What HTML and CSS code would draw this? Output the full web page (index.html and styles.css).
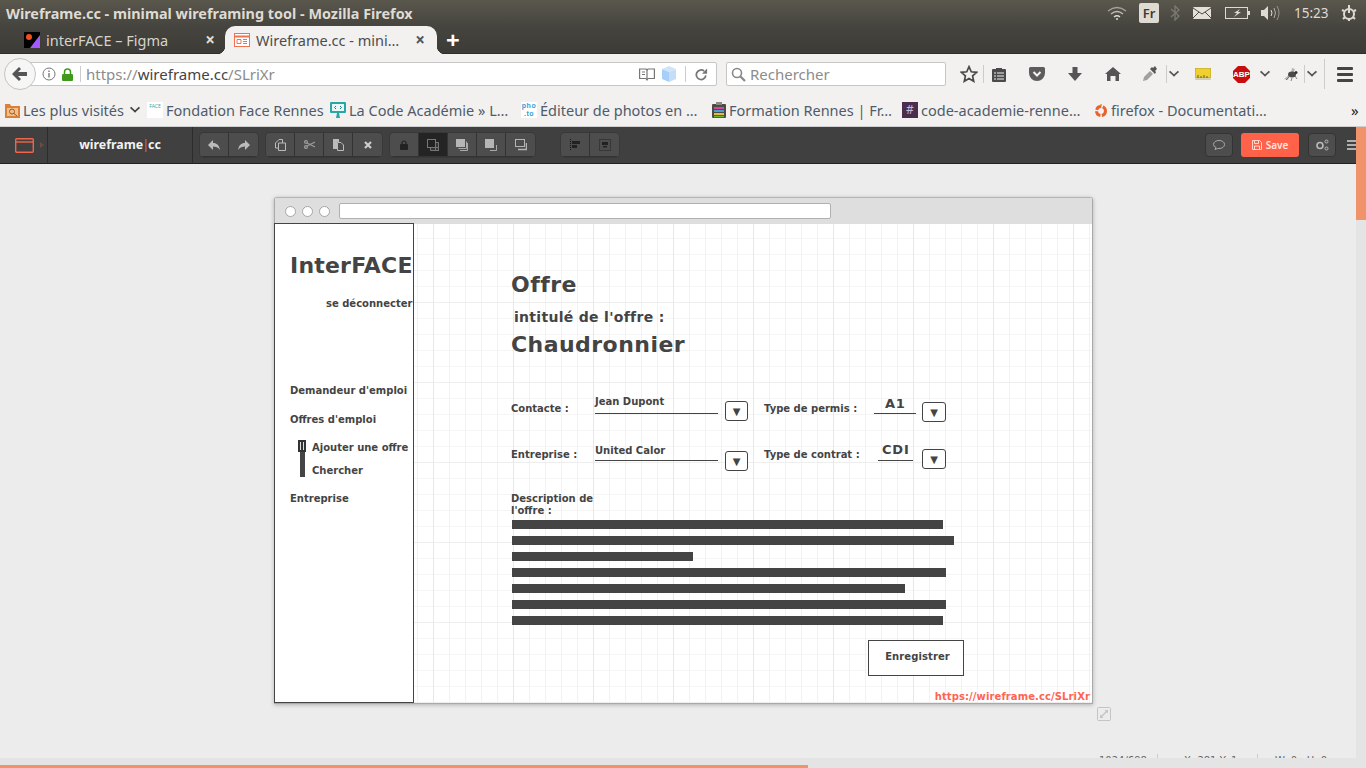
FILE: index.html
```html
<!DOCTYPE html>
<html lang="en">
<head>
    <meta charset="UTF-8">
    <meta name="viewport" content="width=device-width, initial-scale=1.0">
    <title>Wireframe.cc - minimal wireframing tool</title>
    <link rel="stylesheet" href="styles.css">
</head>
<body>
    <header class="os-top">
        <div class="title-row">
            <div class="win-title">Wireframe.cc - minimal wireframing tool - Mozilla Firefox</div>
            <div class="tray">
                <svg class="t-wifi" width="20" height="14" viewBox="0 0 20 14" fill="none" stroke="#dfdbd2" stroke-width="1.4"><path d="M1 5q9-7 18 0" opacity=".6"/><path d="M4 8q6-5 12 0" opacity=".8"/><path d="M7 11q3-2.500 6 0"/><circle cx="10" cy="13" r="1" fill="#dfdbd2" stroke="none"/></svg>
                <span class="t-lang">Fr</span>
                <svg class="t-bt" width="10" height="16" viewBox="0 0 10 16" fill="none" stroke="#7c7a72" stroke-width="1.300"><path d="M1 4l8 7-4 4V1l4 4-8 7"/></svg>
                <svg class="t-mail" width="18" height="12" viewBox="0 0 18 12"><rect width="18" height="12" rx="1" fill="#e4e0d8"/><path d="M0 1l9 6 9-6M0 11l6-6M18 11l-6-6" fill="none" stroke="#4b4a44"/></svg>
                <svg class="t-batt" width="25" height="12" viewBox="0 0 25 12"><rect x=".5" y=".5" width="22" height="11" fill="#55534b" stroke="#dfdbd2"/><rect x="23" y="4" width="2" height="4" fill="#dfdbd2"/><path d="M15 2l-6 4h3l-3 4 7-5h-3z" fill="#dfdbd2"/></svg>
                <svg class="t-vol" width="20" height="16" viewBox="0 0 20 16" fill="none" stroke="#dfdbd2"><path d="M1 5h3l4-4v14l-4-4H1z" fill="#dfdbd2" stroke="none"/><path d="M11 5q2 3 0 6"/><path d="M14 3q3 5 0 10" opacity=".7"/><path d="M17 1q4 7 0 14" opacity=".5"/></svg>
                <span class="t-time">15:23</span>
                <svg class="t-gear" width="16" height="16" viewBox="0 0 16 16" fill="none" stroke="#dfdbd2" stroke-width="2"><circle cx="8" cy="9" r="5"/><path d="M8 0v8M1 5l2 1M15 5l-2 1M2 14l2-2M14 14l-2-2M8 14v2"/></svg>
            </div>
        </div>
        <div class="tab-row">
            <div class="tab">
                <svg class="favicon" width="16" height="16" viewBox="0 0 16 16"><rect width="16" height="16" fill="#000"/><circle cx="5" cy="5" r="3" fill="#f24e1e"/><path d="M6 16l10-13v13z" fill="#a259ff"/></svg>
                <span class="tab-label">interFACE – Figma</span>
                <span class="tab-x light">×</span>
            </div>
            <div class="tab active">
                <svg class="favicon" width="16" height="16" viewBox="0 0 16 16" fill="none" stroke="#f0734f"><rect x=".5" y="1.500" width="15" height="13" fill="#fff"/><path d="M1 4.500h14" stroke-width="2"/><path d="M3 7.500h4v4H3zM9 7.500h4M9 9.500h4M9 11.500h4"/></svg>
                <span class="tab-label">Wireframe.cc - mini…</span>
                <span class="tab-x">×</span>
            </div>
            <span class="tab-new">+</span>
        </div>
    </header>

    <nav class="navbar">
        <span class="back-btn">
            <svg width="16" height="14" viewBox="0 0 16 14" fill="#555"><path d="M7 0l2 2-3 3h9v4H6l3 3-2 2-7-7z"/></svg>
        </span>
        <div class="url-box">
            <svg class="url-info" width="14" height="14" viewBox="0 0 14 14" fill="none" stroke="#777"><circle cx="7" cy="7" r="6"/><path d="M7 6v4.500M7 3.500v1.500" stroke-width="1.400"/></svg>
            <svg class="url-lock" width="11" height="13" viewBox="0 0 11 13"><path d="M2.500 6V4a3 3 0 0 1 6 0v2" fill="none" stroke="#3f9a1b" stroke-width="1.500"/><rect y="6" width="11" height="7" rx="1" fill="#3f9a1b"/></svg>
            <span class="url-sep"></span>
            <span class="url-text">https://<b>wireframe.cc</b>/SLriXr</span>
            <svg class="url-book" width="16" height="13" viewBox="0 0 16 13" fill="none" stroke="#777" stroke-width="1.200"><path d="M.6 1h6.400l1 1 1-1h6.400v9.500H9l-1 1.500-1-1.500H.6z"/><path d="M8 2v9M3 4h3M3 6.500h3"/></svg>
            <svg class="url-cube" width="16" height="16" viewBox="0 0 16 16"><path d="M8 0l7 3-7 3-7-3z" fill="#cfe5fb"/><path d="M1 3l7 3v10l-7-3z" fill="#a8d0f7"/><path d="M15 3l-7 3v10l7-3z" fill="#c4def8"/></svg>
            <span class="url-sep wide"></span>
            <svg class="url-reload" width="13" height="13" viewBox="0 0 15 14" fill="none" stroke="#777" stroke-width="2"><path d="M12.500 8a5.500 5.500 0 1 1-2-5"/><path d="M14 0v6H8z" fill="#777" stroke="none"/></svg>
        </div>
        <div class="search-box">
            <svg width="15" height="15" viewBox="0 0 15 15" fill="none" stroke="#888" stroke-width="1.600"><circle cx="6" cy="6" r="4.500"/><path d="M9.500 9.500L14 14" stroke-width="2.200"/></svg>
            <span>Rechercher</span>
        </div>
        <div class="nav-icons">
            <span class="slot s-star"><svg width="18" height="18" viewBox="0 0 16 16" fill="none" stroke="#4a4a4a" stroke-width="1.500"><path d="M8 1.500l2 4.500 4.800.5-3.600 3.200 1 4.800L8 12l-4.200 2.500 1-4.800L1.200 6.500 6 6z"/></svg></span>
            <span class="nav-sep"></span>
            <span class="slot s-list"><svg width="14" height="15" viewBox="0 0 14 15"><path d="M1 2h3V1h6v1h3a1 1 0 0 1 1 1v11a1 1 0 0 1-1 1H1a1 1 0 0 1-1-1V3a1 1 0 0 1 1-1z" fill="#4a4a4a"/><path d="M2 6h2M5 6h7M2 9h2M5 9h7M2 12h2M5 12h7" stroke="#f2f1f0"/></svg></span>
            <span class="slot s-wide"><svg width="16" height="14" viewBox="0 0 16 14"><path d="M1.500 0h13A1.500 1.500 0 0 1 16 1.500V6a8 8 0 0 1-16 0V1.500A1.500 1.500 0 0 1 1.500 0z" fill="#5c5c5c"/><path d="M4.500 5L8 8.500 11.500 5" fill="none" stroke="#f2f1f0" stroke-width="2"/></svg></span>
            <span class="slot s-wide"><svg width="14" height="14" viewBox="0 0 14 14" fill="#555"><path d="M4.500 0h5v6H14l-7 8-7-8h4.500z"/></svg></span>
            <span class="slot s-wide"><svg width="16" height="14" viewBox="0 0 16 14" fill="#555"><path d="M8 0l8 7h-2v7h-3.500V9h-5v5H2V7H0z"/></svg></span>
            <span class="slot s-drop"><svg width="16" height="16" viewBox="0 0 16 16"><path d="M1 15l1-4 6-6 3 3-6 6z" fill="#a0a0a0"/><path d="M8 3l5 5 1-2-1-1 2-2-2-3-2 2-1-1z" fill="#555"/></svg></span>
            <span class="nav-sep"></span>
            <span class="chev"></span>
            <span class="slot s-ruler"><svg width="16" height="12" viewBox="0 0 16 12"><rect width="16" height="10" rx="1" fill="#f0d030" stroke="#8f8431" stroke-width=".6"/><path d="M3 10V7M6 10V8M9 10V7M12 10V8" stroke="#6b5f13"/><path d="M0 11.500h16" stroke="#ccc"/></svg></span>
            <span class="slot s-abp"><svg width="17" height="17" viewBox="0 0 17 17"><path d="M5 0h7l5 5v7l-5 5H5l-5-5V5z" fill="#c70d0d"/></svg><span class="abp-text">ABP</span></span>
            <span class="chev"></span>
            <span class="slot s-fly"><svg width="16" height="13" viewBox="0 0 16 13"><path d="M1 11l6-5-2 6zM3 2l5 3 1-5 3 1-2 5z" fill="#b5b5b5"/><ellipse cx="9" cy="6.500" rx="4" ry="3" fill="#4a4a4a"/><circle cx="13" cy="4.500" r="1.500" fill="#333"/><path d="M6 9L3 12M9 10l-1 3M12 8l2 3" stroke="#555" stroke-width=".7"/></svg></span>
            <span class="nav-sep"></span>
            <span class="chev"></span>
            <span class="nav-sep tall"></span>
            <span class="burger"><i></i><i></i><i></i></span>
        </div>
    </nav>

    <div class="bookmarks">
        <div class="bm">
            <svg width="15" height="16" viewBox="0 0 15 16"><path d="M0 2h5l1 2h9v12H0z" fill="#d9813a"/><rect x="2" y="6" width="11" height="8" fill="#f2c18a"/><circle cx="7" cy="9.500" r="2.500" fill="none" stroke="#a4561a"/><path d="M9 11.500l3 2.500" stroke="#a4561a"/></svg>
            <span class="bm-label">Les plus visités</span>
            <span class="chev small"></span>
        </div>
        <div class="bm">
            <span class="ico-face">FACE</span>
            <span class="bm-label">Fondation Face Rennes</span>
        </div>
        <div class="bm">
            <svg width="16" height="16" viewBox="0 0 16 16"><rect width="16" height="11" rx="1" fill="#2aa7a5"/><rect x="2" y="2" width="12" height="7" fill="#e8f8f8"/><path d="M6 16h4l-1-5H7z" fill="#2aa7a5"/><path d="M6 4L4.500 5.500 6 7M10 4l1.500 1.500L10 7" fill="none" stroke="#1d7d7c"/></svg>
            <span class="bm-label">La Code Académie » L…</span>
        </div>
        <div class="bm">
            <span class="ico-pho"><span>pho</span><span>.to</span></span>
            <span class="bm-label">Éditeur de photos en …</span>
        </div>
        <div class="bm">
            <svg width="14" height="16" viewBox="0 0 14 16"><rect y="2" width="14" height="14" rx="1" fill="#4b4b45"/><rect x="4" width="6" height="3" fill="#8a8a82"/><path d="M2 6h10" stroke="#d94a8c" stroke-width="2"/><path d="M2 9h10" stroke="#4a9bd9" stroke-width="2"/><path d="M2 12h10" stroke="#e0c03a" stroke-width="2"/><path d="M2 14.500h10" stroke="#6fb23a" stroke-width="1.500"/></svg>
            <span class="bm-label">Formation Rennes | Fr…</span>
        </div>
        <div class="bm">
            <span class="ico-hash">#</span>
            <span class="bm-label">code-academie-renne…</span>
        </div>
        <div class="bm">
            <svg width="14" height="15" viewBox="0 0 14 15" fill="none" stroke="#e8622a" stroke-width="3"><circle cx="7" cy="8" r="4.500" stroke-dasharray="6 1.500"/><circle cx="7" cy="2" r="1" fill="#d9a126" stroke="none"/></svg>
            <span class="bm-label">firefox - Documentati…</span>
        </div>
        <span class="bm-more">»</span>
    </div>

    <div class="app-toolbar">
        <div class="tb-logo">
            <svg width="19" height="15" viewBox="0 0 19 15" fill="none" stroke="#f0654a" stroke-width="1.400"><rect x=".7" y=".7" width="17.600" height="13.600" rx="1"/><path d="M1 4h17"/></svg>
            <span class="tb-arrow"></span>
        </div>
        <div class="tb-brand">wireframe<span class="brand-bar">|</span>cc</div>
        <div class="tb-groups">
            <div class="btn-group">
                <span class="tbtn"><svg width="12" height="10" viewBox="0 0 12 10" fill="#bbb"><path d="M5 0v3c4 0 6 2 7 7-2-3-4-3.500-7-3.500V10L0 5z"/></svg></span>
                <span class="tbtn"><svg width="12" height="10" viewBox="0 0 12 10" fill="#bbb"><path d="M7 0v3C3 3 1 5 0 10c2-3 4-3.500 7-3.500V10l5-5z"/></svg></span>
            </div>
            <div class="btn-group">
                <span class="tbtn"><svg width="11" height="12" viewBox="0 0 11 12" fill="none" stroke="#bbb"><path d="M.5 4L4 .5h3.500V4M3.500 4h7v7.500h-7zM.5 4v5h3"/></svg></span>
                <span class="tbtn"><svg width="11" height="9" viewBox="0 0 11 9" fill="none" stroke="#999" stroke-width="1.300"><circle cx="2" cy="2" r="1.400"/><circle cx="2" cy="7" r="1.400"/><path d="M3 3l8 4M3 6l8-4"/></svg></span>
                <span class="tbtn"><svg width="11" height="12" viewBox="0 0 11 12"><path d="M0 0h6v3H4v7H0z" fill="#bbb"/><path d="M4.500 3.500H8l2.500 2.500v5.500h-6z" fill="#4d4d4d" stroke="#bbb"/></svg></span>
                <span class="tbtn"><svg width="8" height="8" viewBox="0 0 8 8" stroke="#ccc" stroke-width="2.200"><path d="M1 1l6 6M7 1L1 7"/></svg></span>
            </div>
            <div class="btn-group">
                <span class="tbtn"><svg width="8" height="10" viewBox="0 0 8 10"><path d="M2 4.500V3a2 2 0 0 1 4 0v1.500" fill="none" stroke="#222" stroke-width="1.200"/><rect y="4" width="8" height="6" rx="1" fill="#222"/></svg></span>
                <span class="tbtn on"><svg width="12" height="12" viewBox="0 0 12 12" fill="none" stroke="#777"><path d="M3.500 8.500h8v3h-8zM8.500 3.500h3v8h-3z" fill="#333"/><rect x=".5" y=".5" width="8" height="8" fill="#222"/></svg></span>
                <span class="tbtn"><svg width="12" height="12" viewBox="0 0 12 12" stroke="#aaa" fill="none"><rect width="9" height="8" fill="#b5b5b5" stroke="none"/><path d="M10.500 2.500v7h-8M11.500 4v7.500H4"/></svg></span>
                <span class="tbtn"><svg width="12" height="12" viewBox="0 0 12 12" stroke="#aaa" fill="none"><rect width="9" height="9" fill="#b5b5b5" stroke="none"/><path d="M11.500 6v5.500H5"/></svg></span>
                <span class="tbtn"><svg width="12" height="12" viewBox="0 0 12 12" stroke="#b5b5b5" fill="none"><rect x=".5" y=".5" width="9" height="7"/><path d="M3 10.500h8.500V4" stroke-width="1.500"/></svg></span>
            </div>
            <div class="btn-group last">
                <span class="tbtn"><svg width="10" height="12" viewBox="0 0 10 12"><path d="M.5 0v12" stroke="#111" stroke-dasharray="1 1"/><rect x="2" y="2" width="8" height="3" fill="#222"/><rect x="2" y="6" width="5" height="3" fill="#222"/></svg></span>
                <span class="tbtn"><svg width="12" height="12" viewBox="0 0 12 12"><rect x=".5" y=".5" width="11" height="11" fill="none" stroke="#222" stroke-dasharray="1 1"/><rect x="3" y="3" width="6" height="3" fill="#222"/><rect x="4" y="7" width="4" height="1.500" fill="#222"/></svg></span>
            </div>
        </div>
        <div class="tb-right">
            <span class="tbtn lone"><svg width="12" height="10" viewBox="0 0 12 10" fill="none" stroke="#aaa"><path d="M3 7.500Q.5 6.500.5 4.500C.5 2 3 .5 6 .5s5.500 1.500 5.500 4-2.500 4-5.500 4H4.500L2 9.500z"/></svg></span>
            <span class="save-btn">
                <svg width="10" height="10" viewBox="0 0 10 10" fill="none" stroke="#ffd9d0"><path d="M.5.5h7l2 2v7H.5zM2.500.5v3h4v-3M2.500 9.500v-3.500h5v3.500"/></svg>
                Save
            </span>
            <span class="tbtn lone"><svg width="14" height="12" viewBox="0 0 14 12" fill="none" stroke="#bbb"><circle cx="5" cy="6.500" r="3" stroke-width="1.600"/><circle cx="11.500" cy="2.500" r="1.500"/><circle cx="11.500" cy="9.500" r="1.500"/></svg></span>
            <span class="tb-menu"><i></i><i></i><i></i></span>
        </div>
    </div>

    <main class="workspace">
        <div class="wf-browser">
            <div class="wf-chrome">
                <span class="wf-dot"></span>
                <span class="wf-dot"></span>
                <span class="wf-dot"></span>
                <span class="wf-address"></span>
            </div>
            <div class="wf-canvas">
                <aside class="wf-side"></aside>

                <div class="wf-logo">InterFACE</div>
                <div class="wf-text logout">se déconnecter</div>
                <div class="wf-text menu-1">Demandeur d'emploi</div>
                <div class="wf-text menu-2">Offres d'emploi</div>
                <div class="wf-text menu-3">Ajouter une offre</div>
                <div class="wf-text menu-4">Chercher</div>
                <div class="wf-text menu-5">Entreprise</div>
                <div class="wf-scroll"></div>
                <div class="wf-scroll-handle"></div>

                <div class="wf-h1 offre">Offre</div>
                <div class="wf-h2 intitule">intitulé de l'offre :</div>
                <div class="wf-h1 chaud">Chaudronnier</div>

                <div class="wf-text lbl-contact">Contacte :</div>
                <div class="wf-text val-contact">Jean Dupont</div>
                <div class="wf-line line-contact"></div>
                <div class="wf-select sel-contact">▼</div>

                <div class="wf-text lbl-permis">Type de permis :</div>
                <div class="wf-val val-permis">A1</div>
                <div class="wf-line line-permis"></div>
                <div class="wf-select sel-permis">▼</div>

                <div class="wf-text lbl-entreprise">Entreprise :</div>
                <div class="wf-text val-entreprise">United Calor</div>
                <div class="wf-line line-entreprise"></div>
                <div class="wf-select sel-entreprise">▼</div>

                <div class="wf-text lbl-contrat">Type de contrat :</div>
                <div class="wf-val val-contrat">CDI</div>
                <div class="wf-line line-contrat"></div>
                <div class="wf-select sel-contrat">▼</div>

                <div class="wf-text lbl-desc">Description de l'offre :</div>
                <div class="wf-bars">
                    <span style="width: 431px"></span>
                    <span style="width: 442px"></span>
                    <span style="width: 181px"></span>
                    <span style="width: 434px"></span>
                    <span style="width: 393px"></span>
                    <span style="width: 434px"></span>
                    <span style="width: 431px"></span>
                </div>

                <div class="wf-save">Enregistrer</div>
                <div class="wf-link">https://wireframe.cc/SLriXr</div>
            </div>
        </div>
        <svg class="resize-handle" width="14" height="14" viewBox="0 0 14 14" fill="none" stroke="#c4c4c4"><rect x=".5" y=".5" width="13" height="13" rx="1"/><path d="M3.500 10.500l7-7" stroke-width="1.500"/><path d="M7.500 3h3.500v3.500zM3 7.500v3.500h3.500z" fill="#c4c4c4" stroke="none"/></svg>
        <div class="status-info">
            <span class="st-size">1024/698</span>
            <span class="st-pos">X: 281 Y: 1</span>
            <span class="st-dim">W: 0 &nbsp; H: 0</span>
        </div>
        <div class="scroll-x"><span></span></div>
    </main>
    <div class="scroll-y"><span></span></div>
</body>
</html>
```

FILE: styles.css
```css
* {
    margin: 0;
    padding: 0;
    box-sizing: border-box;
}

body {
    width: 1366px;
    height: 768px;
    overflow: hidden;
    position: relative;
    display: flex;
    flex-direction: column;
    background: #ececec;
    font-family: 'Noto Sans', sans-serif;
    color: #444;
}

svg {
    display: block;
    flex: none;
}

/* system title bar + tabs */
.os-top {
    height: 54px;
    flex: none;
    background: linear-gradient(#5a574d, #45443e 50%, #3c3b37);
    border-bottom: 1px solid #2f2e2a;
}

.title-row {
    height: 26px;
    display: flex;
    align-items: center;
    justify-content: space-between;
    padding-left: 6px;
}

.win-title {
    font-size: 14.4px;
    font-weight: 700;
    color: #dfdbd2;
}

.tray {
    display: flex;
    align-items: center;
    color: #dfdbd2;
    padding-right: 9px;
}

.t-lang {
    width: 20px;
    height: 20px;
    margin: 0 11px 0 12px;
    border-radius: 2px;
    background: #dfdbd2;
    color: #3c3b37;
    font-size: 13px;
    font-weight: 600;
    text-align: center;
    line-height: 20px;
}

.t-bt { margin-right: 13px; }
.t-mail { margin-right: 14px; }
.t-batt { margin-right: 10px; }
.t-vol { margin-right: 14px; }

.t-time {
    width: 35px;
    font-size: 13.5px;
    margin-right: 12px;
    white-space: nowrap;
}

.tab-row {
    height: 27px;
    display: flex;
    align-items: flex-start;
}

.tab {
    height: 28px;
    display: flex;
    align-items: center;
    padding-bottom: 1px;
    color: #d6d3cb;
    font-size: 14.5px;
    position: relative;
}

.tab:first-child {
    width: 225px;
    padding-left: 24px;
}

.tab.active {
    width: 212px;
    padding-left: 9px;
    background: #f2f1f0;
    color: #4c4c4c;
    border-radius: 10px 10px 0 0;
}

/* flared bottom corners of the active tab */
.tab.active::before,
.tab.active::after {
    content: "";
    position: absolute;
    bottom: 0;
    width: 8px;
    height: 8px;
}

.tab.active::before {
    left: -8px;
    background: radial-gradient(circle at 0 0, transparent 8px, #f2f1f0 8.500px);
}

.tab.active::after {
    right: -8px;
    background: radial-gradient(circle at 100% 0, transparent 8px, #f2f1f0 8.500px);
}

.favicon {
    margin-right: 6px;
}

.tab-label {
    flex: 1;
    white-space: nowrap;
    overflow: hidden;
}

.tab-x {
    width: 16px;
    margin-right: 9px;
    font-size: 17px;
    font-weight: 700;
    text-align: center;
    color: #555;
}

.tab:first-child .tab-x {
    margin-right: 7px;
}

.tab-x.light {
    color: #ddd;
}

.tab-new {
    margin-left: 9px;
    color: #fff;
    font-size: 24px;
    font-weight: 700;
    line-height: 27px;
}

/* firefox nav bar */
.navbar {
    height: 37px;
    flex: none;
    display: flex;
    align-items: center;
    background: #f2f1f0;
    position: relative;
    padding: 3px 0 0 20px;
}

.back-btn {
    position: absolute;
    left: 4px;
    top: 4px;
    width: 32px;
    height: 32px;
    border-radius: 50%;
    border: 1px solid #c4c4c4;
    background: #f6f6f5;
    z-index: 1;
    display: flex;
    align-items: center;
    justify-content: center;
}

.url-box {
    width: 697px;
    height: 24px;
    flex: none;
    display: flex;
    align-items: center;
    background: #fff;
    border: 1px solid #c6c6c6;
    border-radius: 0 2px 2px 0;
    padding: 0 8px 0 21px;
}

.url-lock { margin-left: 6px; }

.url-sep {
    width: 1px;
    height: 16px;
    background: #ccc;
    margin: 0 5px 0 7px;
}

.url-sep.wide {
    margin: 0 9px 0 8px;
}

.url-text {
    flex: 1;
    font-size: 15px;
    color: #8c8c8c;
    white-space: nowrap;
}

.url-text b {
    font-weight: 400;
    color: #444;
}

.url-book { margin-right: 6px; }

.search-box {
    width: 220px;
    height: 24px;
    flex: none;
    margin-left: 9px;
    display: flex;
    align-items: center;
    gap: 4px;
    padding-left: 4px;
    background: #fff;
    border: 1px solid #c6c6c6;
    border-radius: 2px;
    font-size: 15px;
    color: #8c8c8c;
}

.nav-icons {
    display: flex;
    align-items: center;
    margin-left: 9px;
    height: 100%;
}

.slot {
    display: flex;
    align-items: center;
    justify-content: center;
    position: relative;
}

.s-star { width: 28px; }
.s-list { width: 30px; margin-right: 4px; }
.s-wide { width: 38px; }
.s-drop { width: 32px; margin-left: 2px; }
.s-ruler { width: 38px; }
.s-abp { width: 34px; margin-left: 2px; }
.s-fly { width: 27px; margin-left: 2px; }

.abp-text {
    position: absolute;
    left: 9px;
    top: 3px;
    font-family: 'Liberation Sans', sans-serif;
    font-size: 8px;
    font-weight: 700;
    color: #fff;
    line-height: 11px;
}

.nav-sep {
    width: 1px;
    height: 18px;
    background: #ccc;
}

.nav-sep.tall {
    height: 30px;
    margin-left: 2px;
}

.chev {
    width: 8px;
    height: 8px;
    border-right: 2px solid #555;
    border-bottom: 2px solid #555;
    transform: scale(.9, .8) rotate(45deg);
    margin: -4px 6px 0 3px;
}

.chev.small {
    margin: -4px 0 0 4px;
    border-color: #444;
}

.burger {
    margin-left: 12px;
    display: flex;
    flex-direction: column;
    gap: 3px;
}

.burger i {
    display: block;
    width: 16px;
    height: 3px;
    border-radius: 1px;
    background: #444;
}

/* bookmarks */
.bookmarks {
    height: 36px;
    flex: none;
    display: grid;
    grid-template-columns: 142px 183px 191px 191px 190px 192px 261px 1fr;
    align-items: center;
    padding: 3px 0 0 5px;
    background: #f2f1f0;
    border-bottom: 1px solid #cfcfcf;
    font-size: 14.5px;
    color: #4f5b6a;
}

.bm {
    display: flex;
    align-items: center;
    gap: 3px;
    white-space: nowrap;
}

.ico-face {
    width: 16px;
    height: 16px;
    background: #fff;
    color: #3aa7a5;
    font-size: 5px;
    line-height: 8px;
    text-align: center;
}

.ico-pho {
    width: 16px;
    height: 16px;
    display: flex;
    flex-direction: column;
    align-items: center;
    background: #fff;
    font-family: 'Liberation Sans', sans-serif;
    font-size: 7px;
    font-weight: 700;
    line-height: 8px;
    letter-spacing: 0.5px;
    color: #2b9fd8;
}

.ico-hash {
    width: 16px;
    height: 16px;
    background: #4a2d4f;
    color: #cdb9cf;
    font-size: 12px;
    text-align: center;
    line-height: 16px;
}

.bm-more {
    font-size: 15px;
    color: #222;
    margin-left: -4px;
}

/* wireframe.cc toolbar */
.app-toolbar {
    height: 37px;
    flex: none;
    display: flex;
    align-items: center;
    background: #404040;
    border-bottom: 1px solid #222;
}

.tb-logo {
    width: 48px;
    height: 100%;
    display: flex;
    align-items: center;
    padding-left: 15px;
    border-right: 1px solid #2c2c2c;
}

.tb-arrow {
    margin-left: 6px;
    border-left: 4px solid #6d4a42;
    border-top: 3px solid transparent;
    border-bottom: 3px solid transparent;
}

.tb-brand {
    width: 145px;
    height: 100%;
    display: flex;
    align-items: center;
    justify-content: center;
    padding-bottom: 1px;
    border-right: 1px solid #2c2c2c;
    color: #f2f2f2;
    font-size: 12.4px;
    font-weight: 700;
}

.brand-bar {
    color: #f0654a;
    font-weight: 400;
    margin: 0 -1px;
}

.tb-groups {
    display: flex;
    margin-left: 7px;
    gap: 8px;
}

.btn-group {
    display: flex;
    border-radius: 4px;
    overflow: hidden;
    box-shadow: 0 0 0 1px #383838;
}

.btn-group.last {
    margin-left: 18px;
}

.tbtn {
    width: 29px;
    height: 24px;
    display: flex;
    align-items: center;
    justify-content: center;
    background: #4d4d4d;
    border-right: 1px solid #333;
    border-bottom: 1px solid #333;
}

.tbtn:last-child {
    border-right: none;
}

.tbtn.on {
    background: #242424;
}

.tb-right {
    margin-left: auto;
    display: flex;
    align-items: center;
    padding-right: 10px;
    gap: 8px;
}

.tbtn.lone {
    width: 28px;
    border: 1px solid #333;
    border-radius: 4px;
}

.save-btn {
    width: 58px;
    height: 24px;
    margin-right: 1px;
    display: flex;
    align-items: center;
    justify-content: center;
    gap: 4px;
    background: #ff6249;
    border-radius: 3px;
    color: #ffe6e0;
    font-size: 10px;
    font-weight: 600;
}

.tb-menu {
    display: flex;
    flex-direction: column;
    gap: 2px;
    margin-left: 3px;
}

.tb-menu i {
    display: block;
    width: 9px;
    height: 2px;
    background: #b0b0b0;
}

/* workspace */
.workspace {
    flex: 1;
    position: relative;
    padding: 33px 0 0 274px;
    overflow: hidden;
}

.wf-browser {
    width: 819px;
    border: 1px solid #a9a9a9;
    border-top-color: #b4b4b4;
    border-radius: 3px 3px 0 0;
    box-shadow: 0 1px 4px rgba(0, 0, 0, 0.25);
    background: #fff;
}

.wf-chrome {
    height: 26px;
    display: flex;
    align-items: center;
    gap: 6px;
    padding-left: 10px;
    background: #dedede;
    border-radius: 2px 2px 0 0;
}

.wf-dot {
    width: 11px;
    height: 11px;
    border-radius: 50%;
    border: 1px solid #a6a6a6;
    background: #fff;
}

.wf-address {
    width: 492px;
    height: 16px;
    margin-left: 3px;
    border: 1px solid #b0b0b0;
    border-radius: 2px;
    background: #fff;
}

.wf-canvas {
    position: relative;
    height: 479px;
    background-color: #fff;
    background-image:
        linear-gradient(90deg, #e8e8e8 1px, transparent 1px),
        linear-gradient(#eeeeee 1px, transparent 1px),
        linear-gradient(90deg, #f2f2f2 1px, transparent 1px),
        linear-gradient(#f5f5f5 1px, transparent 1px);
    background-size: 80px 80px, 80px 80px, 16px 16px, 16px 16px;
    background-position: 78px 0, 0 78px, 14px 0, 0 14px;
    font-family: 'DejaVu Sans', sans-serif;
    color: #444;
}

.wf-canvas > div {
    position: absolute;
}

.wf-side {
    position: absolute;
    left: -1px;
    top: -1px;
    bottom: 0;
    width: 140px;
    background: #fff;
    border: 1px solid #444;
}

.wf-logo {
    left: 15px;
    top: 27px;
    font-size: 22px;
    font-weight: 700;
    line-height: 30px;
    letter-spacing: 0.2px;
}

.wf-text {
    font-size: 10px;
    font-weight: 700;
    line-height: 12px;
    white-space: nowrap;
}

.logout { left: 51px; top: 74px; }
.menu-1 { left: 15px; top: 161px; }
.menu-2 { left: 15px; top: 190px; }
.menu-3 { left: 37px; top: 218px; }
.menu-4 { left: 37px; top: 241px; }
.menu-5 { left: 15px; top: 269px; }

.wf-scroll {
    left: 25px;
    top: 216px;
    width: 5px;
    height: 37px;
    background: #444;
}

.wf-scroll-handle {
    left: 23px;
    top: 216px;
    width: 8px;
    height: 12px;
    border: 2px solid #333;
    background: #333;
    background-image: linear-gradient(90deg, #ddd 1px, #333 1px, #333 3px, #ddd 3px);
}

.wf-h1 {
    font-size: 22px;
    font-weight: 700;
    line-height: 28px;
    letter-spacing: 0.45px;
    white-space: nowrap;
}

.offre { left: 236px; top: 47px; }
.chaud { left: 236px; top: 107px; }

.wf-h2 {
    font-size: 14px;
    font-weight: 700;
    line-height: 18px;
    letter-spacing: 0.3px;
    white-space: nowrap;
}

.intitule { left: 239px; top: 84px; }

.wf-val {
    font-size: 13px;
    font-weight: 700;
    line-height: 16px;
    letter-spacing: 0.8px;
}

.wf-line {
    height: 1px;
    background: #444;
}

.wf-select {
    width: 24px;
    height: 20px;
    border: 1px solid #444;
    border-radius: 3px;
    background: #fff;
    font-size: 10px;
    line-height: 19px;
    text-align: center;
    color: #444;
}

.lbl-contact { left: 236px; top: 179px; }
.val-contact { left: 320px; top: 172px; }
.line-contact { left: 320px; top: 189px; width: 123px; }
.sel-contact { left: 450px; top: 177px; width: 23px; }

.lbl-permis { left: 489px; top: 179px; }
.val-permis { left: 610px; top: 172px; }
.line-permis { left: 599px; top: 189px; width: 42px; }
.sel-permis { left: 647px; top: 178px; }

.lbl-entreprise { left: 236px; top: 225px; }
.val-entreprise { left: 320px; top: 221px; }
.line-entreprise { left: 320px; top: 236px; width: 123px; }
.sel-entreprise { left: 450px; top: 227px; width: 23px; }

.lbl-contrat { left: 489px; top: 225px; }
.val-contrat { left: 607px; top: 218px; }
.line-contrat { left: 603px; top: 236px; width: 35px; }
.sel-contrat { left: 647px; top: 225px; }

.lbl-desc {
    left: 236px;
    top: 269px;
    width: 90px;
    white-space: normal;
}

.wf-bars {
    left: 237px;
    top: 296px;
    display: flex;
    flex-direction: column;
    gap: 7px;
}

.wf-bars span {
    display: block;
    height: 9px;
    background: #444;
}

.wf-save {
    left: 593px;
    top: 416px;
    width: 96px;
    height: 36px;
    padding-left: 3px;
    border: 1px solid #444;
    background: #fff;
    font-size: 10px;
    font-weight: 700;
    line-height: 32px;
    letter-spacing: 0.1px;
    text-align: center;
}

.wf-link {
    right: 2px;
    top: 467px;
    font-size: 10px;
    font-weight: 700;
    line-height: 12px;
    letter-spacing: 0.1px;
    color: #ff6452;
}

.resize-handle {
    position: absolute;
    left: 1097px;
    top: 543px;
}

.status-info {
    position: absolute;
    top: 590px;
    left: 1099px;
    height: 14px;
    display: flex;
    font-family: 'DejaVu Sans', sans-serif;
    font-size: 10px;
    line-height: 14px;
    color: #666;
    white-space: nowrap;
}

.st-size { width: 59px; border-right: 1px solid #ccc; }
.st-pos { width: 100px; padding-left: 26px; border-right: 1px solid #ccc; }
.st-dim { padding-left: 17px; }

/* page scrollbars, the right one runs over the toolbar */
.scroll-y {
    position: absolute;
    right: 0;
    top: 127px;
    bottom: 0;
    width: 10px;
    background: #e4e4e4;
}

.scroll-y span {
    display: block;
    height: 93px;
    background: #f0926a;
}

.scroll-x {
    position: absolute;
    left: 0;
    right: 0;
    bottom: 0;
    height: 10px;
    background: #e4e4e4;
    display: flex;
    align-items: flex-end;
}

.scroll-x span {
    display: block;
    width: 808px;
    height: 3px;
    background: #f0926a;
}
```
